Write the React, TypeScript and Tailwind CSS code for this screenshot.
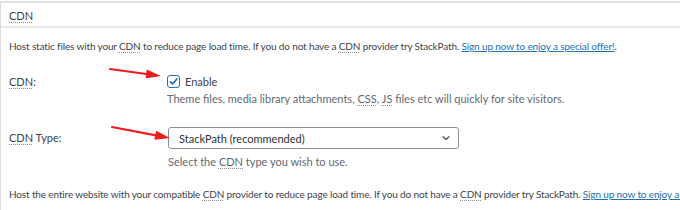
import React from "react";

function Abbr({ children }: { children: React.ReactNode }) {
  return (
    <span className="underline decoration-dotted decoration-[#8c8f94] underline-offset-2">{children}</span>
  );
}

function Arrow({ className, width, height }: { className: string; width: number; height: number }) {
  // shaft from top-left to the tip at bottom-right
  const angle = Math.atan2(height - 4, width - 4);
  const tipX = width - 2;
  const tipY = height - 2;
  const len = 15;
  const half = 4.5;
  const bx = tipX - len * Math.cos(angle);
  const by = tipY - len * Math.sin(angle);
  const px = -Math.sin(angle) * half;
  const py = Math.cos(angle) * half;
  return (
    <svg className={`absolute ${className}`} width={width} height={height} viewBox={`0 0 ${width} ${height}`} fill="none">
      <line x1="2" y1="2" x2={bx + 2 * Math.cos(angle)} y2={by + 2 * Math.sin(angle)} stroke="#ee1c1c" strokeWidth="2.2" strokeLinecap="round" />
      <path d={`M${tipX} ${tipY} L${bx + px} ${by + py} L${bx - px} ${by - py} Z`} fill="#ee1c1c" />
    </svg>
  );
}

export default function App() {
  return (
    <div
      className="relative w-[680px] h-[210px] bg-white overflow-hidden text-[11px] text-[#3c434a]"
      style={{ fontFamily: 'Lato, "Open Sans", sans-serif' }}
    >
      <div className="h-[210px] border-l border-[#dcdcde] border-t-2 border-t-[#e2e2e2] mt-px">
        {/* Header */}
        <div className="h-[25px] flex items-center pt-[3px] px-2 border-b-2 border-[#e8e8e8]">
          <Abbr>CDN</Abbr>
        </div>

        <p className="px-2 mt-[10px] leading-[16px] whitespace-nowrap text-[10px] tracking-[-0.14px]">
          Host static files with your <Abbr>CDN</Abbr> to reduce page load time. If you do not have a <Abbr>CDN</Abbr> provider try StackPath.{" "}
          <a className="text-[#2271b1] underline">Sign up now to enjoy a special offer!</a>.
        </p>

        {/* CDN row */}
        <div className="flex mt-[19px]">
          <div className="w-[166px] px-2 leading-[16px] pt-px">
            <Abbr>CDN</Abbr>:
          </div>
          <div>
            <label className="flex items-center gap-[5px] h-[16px]">
              <span className="w-[13px] h-[13px] rounded-[3px] border border-[#2271b1] flex items-center justify-center">
                <svg width="11" height="11" viewBox="0 0 11 11" fill="none">
                  <path d="M2.3 5.8 L4.6 8 L8.8 3" stroke="#2271b1" strokeWidth="1.7" strokeLinecap="round" strokeLinejoin="round" />
                </svg>
              </span>
              <span className="leading-[16px] pt-px">Enable</span>
            </label>
            <p className="mt-[2px] leading-[16px] text-[#646970] whitespace-nowrap">
              Theme files, media library attachments, <Abbr>CSS</Abbr>, <Abbr>JS</Abbr> files etc will quickly for site visitors.
            </p>
          </div>
        </div>

        {/* CDN Type row */}
        <div className="flex mt-[20px]">
          <div className="w-[167px] px-2 h-[22px] flex items-center pt-px">
            <span>
              <Abbr>CDN</Abbr> Type:
            </span>
          </div>
          <div>
            <div className="w-[291px] h-[22px] border border-[#8c8f94] rounded-[3px] flex items-center justify-between pl-[10px] pr-[7px]">
              <span className="leading-[16px] text-[#2c3338] pt-px">StackPath (recommended)</span>
              <svg width="10" height="10" viewBox="0 0 10 10" fill="none">
                <path d="M2 3.8 L5 6.6 L8 3.8" stroke="#50575e" strokeWidth="1.3" strokeLinecap="round" strokeLinejoin="round" />
              </svg>
            </div>
            <p className="mt-[5px] leading-[16px] text-[#646970]">
              Select the <Abbr>CDN</Abbr> type you wish to use.
            </p>
          </div>
        </div>

        <p className="px-2 mt-[16px] leading-[16px] whitespace-nowrap text-[10px] tracking-[-0.14px]">
          Host the entire website with your compatible <Abbr>CDN</Abbr> provider to reduce page load time. If you do not have a <Abbr>CDN</Abbr> provider try StackPath.{" "}
          <a className="text-[#2271b1] underline">Sign up now to enjoy a special offer!</a>
        </p>
      </div>

      <Arrow className="left-[108px] top-[67px]" width={55} height={11} />
      <Arrow className="left-[110px] top-[125px]" width={62} height={15} />
    </div>
  );
}
